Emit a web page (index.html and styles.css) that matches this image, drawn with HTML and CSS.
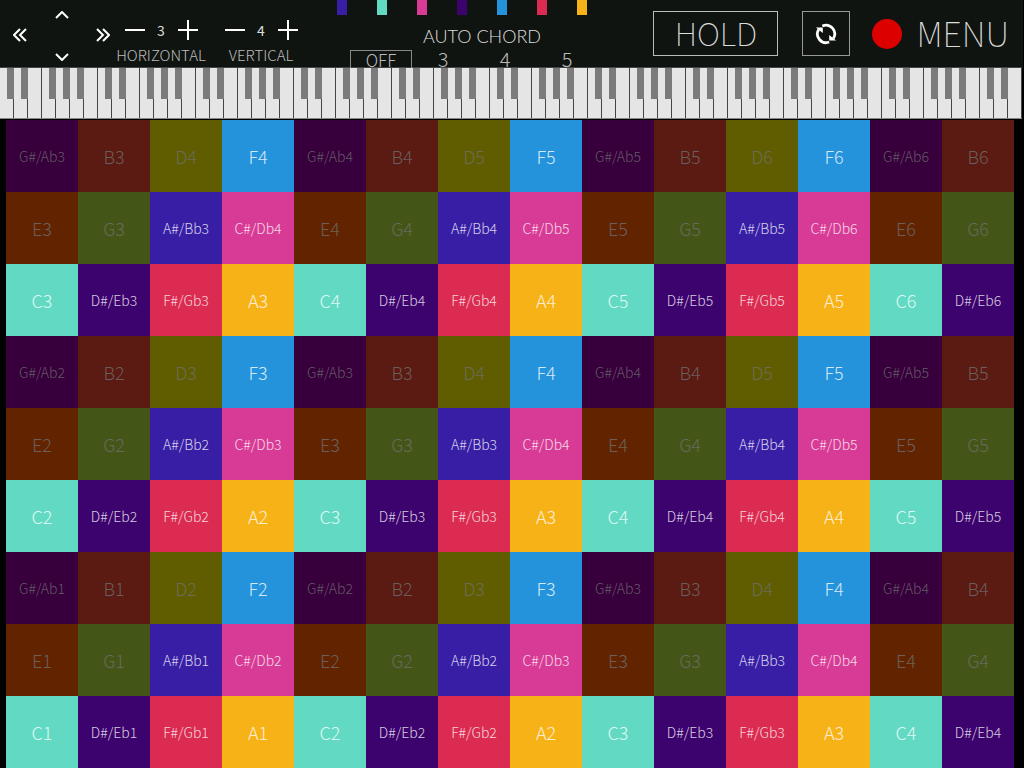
FILE: index.html
```
<!DOCTYPE html>
<html lang="en">
<head>
<meta charset="utf-8">
<title>Chord Pads</title>
<link rel="stylesheet" href="styles.css">
</head>
<body>
<header class="toolbar">
  <div class="dirpad">
    <button class="left" aria-label="Octave down"><svg width="14" height="14" viewBox="0 0 14 14"><path d="M7 1L1 7l6 6M13 1L7 7l6 6"/></svg></button>
    <button class="up" aria-label="Row up"><svg width="14" height="8" viewBox="0 0 14 8"><path d="M1 7l6-6 6 6"/></svg></button>
    <button class="down" aria-label="Row down"><svg width="14" height="8" viewBox="0 0 14 8"><path d="M1 1l6 6 6-6"/></svg></button>
    <button class="right" aria-label="Octave up"><svg width="14" height="14" viewBox="0 0 14 14"><path d="M1 1l6 6-6 6M7 1l6 6-6 6"/></svg></button>
  </div>

  <div class="stepper">
    <div class="controls">
      <button aria-label="Less horizontal"><svg width="20" height="20" viewBox="0 0 20 20"><path d="M0 10h20"/></svg></button>
      <output>3</output>
      <button aria-label="More horizontal"><svg width="20" height="20" viewBox="0 0 20 20"><path d="M0 10h20M10 0v20"/></svg></button>
    </div>
    <div class="caption">HORIZONTAL</div>
  </div>
  <div class="stepper">
    <div class="controls">
      <button aria-label="Less vertical"><svg width="20" height="20" viewBox="0 0 20 20"><path d="M0 10h20"/></svg></button>
      <output>4</output>
      <button aria-label="More vertical"><svg width="20" height="20" viewBox="0 0 20 20"><path d="M0 10h20M10 0v20"/></svg></button>
    </div>
    <div class="caption">VERTICAL</div>
  </div>

  <div class="chord">
    <div class="scale">
      <span class="as"></span><span class="c"></span><span class="cs"></span><span class="ds"></span><span class="f"></span><span class="fs"></span><span class="a"></span>
    </div>
    <h2>AUTO CHORD</h2>
    <div class="options">
      <button class="selected">OFF</button>
      <button>3</button>
      <button>4</button>
      <button>5</button>
    </div>
  </div>

  <div class="actions">
    <button class="hold">HOLD</button>
    <button class="loop" aria-label="Reset"><svg width="22" height="22" viewBox="0 0 24 24"><path d="M4 7A9.500 9.500 0 0 0 15.500 20.800M8 3.300A9.500 9.500 0 0 1 20 17"/><path class="tip" d="M1 5h7.500v6zM23 19h-7.500v-6z"/></svg></button>
    <button class="record" aria-label="Record"></button>
    <button class="menu">MENU</button>
  </div>
</header>

<div class="keyboard" id="keyboard"></div>
<main class="pads" id="pads"></main>

<script src="pads.js"></script>
</body>
</html>
```
FILE: styles.css
```
* { box-sizing: border-box; }
body { margin: 0; background: #000; color: #ddd; font-family: "Noto Sans CJK JP", "Noto Sans", sans-serif; font-weight: 300; overflow: hidden; }
button { margin: 0; padding: 0; border: 0; background: none; color: inherit; font: inherit; cursor: pointer; }
svg { display: block; fill: none; stroke: #fff; stroke-width: 2; }

/* toolbar */
.toolbar { display: flex; height: 67px; margin-right: 1px; background: #101410; }
.dirpad { display: grid; grid-template-columns: 14px 1fr 14px; grid-template-rows: 22px 18px 26px; width: 111px; padding: 4px 1px 0 13px; place-items: center; }
.dirpad .left { grid-area: 2 / 1; }
.dirpad .up { grid-area: 1 / 2; }
.dirpad .down { grid-area: 3 / 2; }
.dirpad .right { grid-area: 2 / 3; }
.stepper { width: 100px; padding-top: 20px; text-align: center; }
.controls { display: flex; justify-content: center; align-items: center; height: 20px; }
.controls output { width: 33px; font-size: 14px; line-height: 20px; font-weight: 400; }
.caption { margin-top: 5px; font-size: 15px; line-height: 20px; color: #bbb; }

.chord { width: 262px; margin-left: 26px; }
.scale { display: flex; gap: 30px; height: 15px; }
.scale span { width: 10px; }
.chord h2 { margin: 9px 0 0; padding-left: 28px; font-family: Lato, sans-serif; font-size: 18px; line-height: 24px; font-weight: 300; text-align: center; }
.options { display: grid; grid-template-columns: repeat(4, 62px); margin: 2px 0 0 13px; color: #bbb; }
.options button { height: 18px; font-size: 20px; line-height: 18px; }
.options .selected { border: 1px solid #888; border-bottom: 0; font-size: 17px; line-height: 16px; }

.actions { display: flex; align-items: center; height: 67px; margin-left: auto; padding-right: 14px; }
.hold { width: 125px; height: 45px; padding-bottom: 4px; border: 1px solid #bbb; font-size: 32px; font-weight: 100; line-height: 36px; }
.loop { display: flex; align-items: center; justify-content: center; width: 48px; height: 45px; margin-left: 24px; border: 1px solid #999; }
.loop svg { stroke-width: 3; }
.loop .tip { fill: #fff; stroke: none; }
.record { width: 30px; height: 30px; margin-left: 22px; border-radius: 50%; background: #dc0000; }
.menu { margin-left: 14px; padding-bottom: 2px; font-size: 34px; font-weight: 100; line-height: 40px; }

/* piano strip */
.keyboard { display: grid; grid-auto-flow: column; grid-auto-columns: 1fr; height: 52px; margin-right: 2px; border-top: 1px solid #444; border-bottom: 1px solid #888; }
.keyboard span { background: linear-gradient(#444, #444) right / 1px 100% no-repeat #e5e5e5; }
.keyboard .sharp { background: linear-gradient(#7b7b7b, #7b7b7b) right top / 50% 31px no-repeat, linear-gradient(#444, #444) right / 1px 100% no-repeat #e5e5e5; }

/* pads */
.pads { display: grid; grid-template-columns: repeat(14, 1fr); margin: 1px 10px 0 6px; }
.pads button { aspect-ratio: 1; overflow: hidden; font-size: 18px; line-height: 24px; color: rgba(255, 255, 255, .8); }
.pads .accidental { font-size: 14px; }
.pads .off { color: rgba(112, 112, 112, .8); }

.c { background: #62dac3; }
.cs { background: #d83b95; }
.d { background: #5f5d00; }
.ds { background: #3c036e; }
.e { background: #622400; }
.f { background: #2493db; }
.fs { background: #dc2b50; }
.g { background: #435618; }
.gs { background: #37003c; }
.a { background: #f7b217; }
.as { background: #371ea4; }
.b { background: #5b1a12; }
```
FILE: pads.js
```
var names = ['C', 'C#/Db', 'D', 'D#/Eb', 'E', 'F', 'F#/Gb', 'G', 'G#/Ab', 'A', 'A#/Bb', 'B'];
var classes = ['c', 'cs', 'd', 'ds', 'e', 'f', 'fs', 'g', 'gs', 'a', 'as', 'b'];
var outOfScale = [2, 4, 7, 8, 11];
var horizontal = 3, vertical = 4;
var rows = 9, cols = 14, lowest = 12;

var pads = document.getElementById('pads');
for (var row = rows - 1; row >= 0; row--) {
  for (var col = 0; col < cols; col++) {
    var note = lowest + row * vertical + col * horizontal;
    var step = note % 12;
    var pad = document.createElement('button');
    pad.className = classes[step];
    if (names[step].length > 1) pad.className += ' accidental';
    if (outOfScale.indexOf(step) >= 0) pad.className += ' off';
    pad.textContent = names[step] + Math.floor(note / 12);
    pads.appendChild(pad);
  }
}

// 73 white keys starting from C, no black key after E and B
var keyboard = document.getElementById('keyboard');
for (var i = 0; i < 73; i++) {
  var key = document.createElement('span');
  if (i % 7 != 2 && i % 7 != 6) key.className = 'sharp';
  keyboard.appendChild(key);
}
```
